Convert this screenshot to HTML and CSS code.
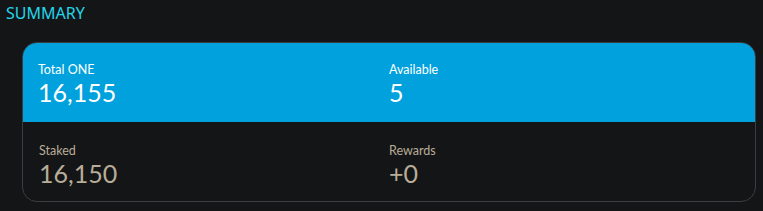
FILE: index.html
```html
<!DOCTYPE html>
<html>
<head>
<meta charset="utf-8">
<link rel="stylesheet" href="styles.css">
</head>
<body>
<div class="page">
  <h2 class="title">SUMMARY</h2>
  <div class="card">
    <div class="row top">
      <div class="cell">
        <div class="label">Total ONE</div>
        <div class="value">16,155</div>
      </div>
      <div class="cell">
        <div class="label">Available</div>
        <div class="value">5</div>
      </div>
    </div>
    <div class="row bottom">
      <div class="cell">
        <div class="label">Staked</div>
        <div class="value">16,150</div>
      </div>
      <div class="cell">
        <div class="label">Rewards</div>
        <div class="value">+0</div>
      </div>
    </div>
  </div>
</div>
</body>
</html>
```

FILE: styles.css
```css
html, body {
  margin: 0;
  padding: 0;
  background: #141517;
}
.page {
  padding: 4px 7px 0 6px;
  font-family: Lato, "Open Sans", sans-serif;
}
.title {
  margin: 0;
  font-family: "Noto Sans", sans-serif;
  font-weight: 400;
  font-size: 16px;
  line-height: 18px;
  color: #22d5ea;
}
.card {
  margin: 20px 0 0 16px;
  border: 1px solid #3c3d40;
  border-radius: 15px;
  overflow: hidden;
  width: 732px;
}
.row {
  display: grid;
  grid-template-columns: 1fr 1fr;
  padding: 0 16px;
  box-sizing: border-box;
}
.top {
  background: #00a1dd;
  margin: -1px -1px 0 -1px;
  height: 80px;
  border-radius: 15px 15px 0 0;
  padding-top: 20px;
}
.bottom {
  height: 79px;
  padding-top: 21px;
}
.label {
  font-size: 12.5px;
  line-height: 15px;
  color: #ffffff;
}
.value {
  font-size: 25px;
  line-height: 31px;
  color: #ffffff;
}
.bottom .label,
.bottom .value {
  color: #b9ad98;
}
```
